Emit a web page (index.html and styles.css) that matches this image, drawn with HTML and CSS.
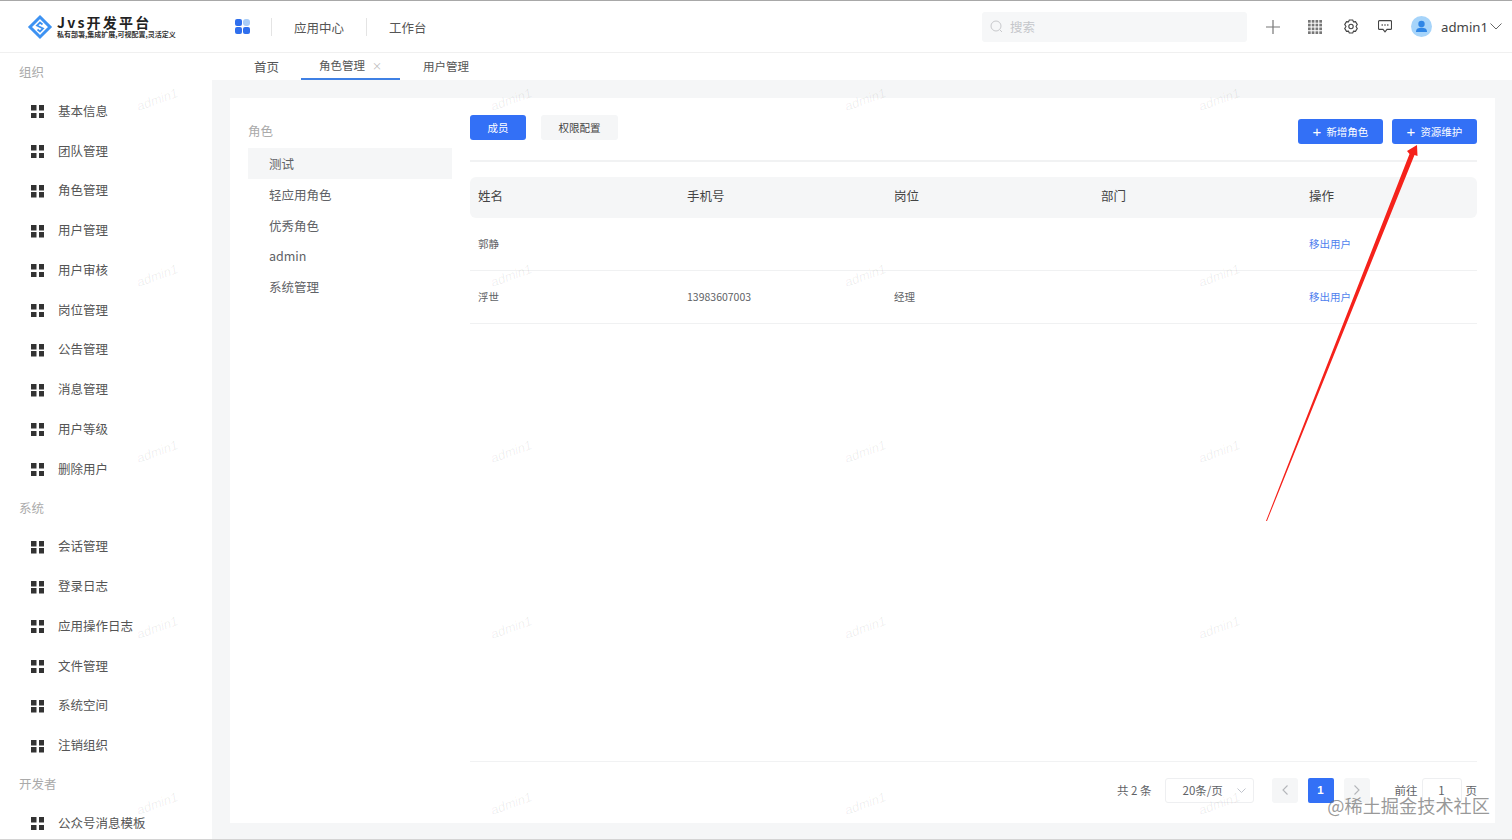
FILE: index.html
```html
<!DOCTYPE html>
<html lang="zh-CN">
<head>
    <meta charset="UTF-8">
    <title>Jvs开发平台</title>
    <link rel="stylesheet" href="styles.css">
</head>
<body>

    <!-- Top bar -->
    <div class="topbar">
        <div class="logo">
            <svg class="logo-icon" width="26" height="26" viewBox="0 0 26 26" fill="none" stroke="#3d92f2">
                <path d="M13 3 L23 13 L13 23 L3 13 Z" stroke-width="3"/>
                <path d="M15.500 10.500 L13 8.500 L10 11.500 L16 14.500 L13 17.500 L10.500 15.500" stroke-width="1.800"/>
            </svg>
            <div class="logo-text">
                <div class="logo-title">Jvs开发平台</div>
                <div class="logo-sub">私有部署,集成扩展,可视配置,灵活定义</div>
            </div>
        </div>
        <svg class="app-icon" width="15" height="15" viewBox="0 0 15 15">
            <rect x="0" y="0" width="7" height="7" rx="2" fill="#2f6fed"/>
            <rect x="8" y="0" width="7" height="7" rx="3" fill="#a9cdf7"/>
            <rect x="0" y="8" width="7" height="7" rx="2" fill="#2f6fed"/>
            <rect x="8" y="8" width="7" height="7" rx="2" fill="#2f6fed"/>
        </svg>
        <div class="nav">
            <div class="nav-item">应用中心</div>
            <div class="nav-item">工作台</div>
        </div>
        <div class="search">
            <svg width="13" height="13" viewBox="0 0 13 13" fill="none" stroke="#c8c9cc" stroke-width="1">
                <circle cx="6" cy="6" r="5"/>
                <path d="M10 10 L12 12"/>
            </svg>
            <span>搜索</span>
        </div>
        <div class="tools">
            <svg class="tool-plus" width="14" height="14" viewBox="0 0 14 14" stroke="#777" stroke-width="1.200">
                <path d="M7 0 V14 M0 7 H14"/>
            </svg>
            <svg class="tool-grid" width="14" height="14" viewBox="0 0 14 14" fill="#777">
                <rect x="0" y="0" width="2.700" height="2.700"/><rect x="3.700" y="0" width="2.700" height="2.700"/><rect x="7.500" y="0" width="2.700" height="2.700"/><rect x="11.300" y="0" width="2.700" height="2.700"/>
                <rect x="0" y="3.700" width="2.700" height="2.700"/><rect x="3.700" y="3.700" width="2.700" height="2.700"/><rect x="7.500" y="3.700" width="2.700" height="2.700"/><rect x="11.300" y="3.700" width="2.700" height="2.700"/>
                <rect x="0" y="7.500" width="2.700" height="2.700"/><rect x="3.700" y="7.500" width="2.700" height="2.700"/><rect x="7.500" y="7.500" width="2.700" height="2.700"/><rect x="11.300" y="7.500" width="2.700" height="2.700"/>
                <rect x="0" y="11.300" width="2.700" height="2.700"/><rect x="3.700" y="11.300" width="2.700" height="2.700"/><rect x="7.500" y="11.300" width="2.700" height="2.700"/><rect x="11.300" y="11.300" width="2.700" height="2.700"/>
            </svg>
            <svg class="tool-gear" width="14" height="15" viewBox="0 0 14 15" fill="none" stroke="#444" stroke-width="1.100">
                <path d="M5.300 1 H8.700 L9.500 2.800 L11.500 2.600 L13.300 5.600 L12 7.500 L13.300 9.400 L11.500 12.400 L9.500 12.200 L8.700 14 H5.300 L4.500 12.200 L2.500 12.400 L0.700 9.400 L2 7.500 L0.700 5.600 L2.500 2.600 L4.500 2.800 Z"/>
                <circle cx="7" cy="7.500" r="2.200"/>
            </svg>
            <svg class="tool-chat" width="14" height="13" viewBox="0 0 14 13" fill="none" stroke="#444" stroke-width="1.100">
                <path d="M1.500 0.600 H12.500 A1 1 0 0 1 13.500 1.600 V8.400 A1 1 0 0 1 12.500 9.400 H9 L7 11.800 L5 9.400 H1.500 A1 1 0 0 1 0.500 8.400 V1.600 A1 1 0 0 1 1.500 0.600 Z"/>
                <path d="M3.600 5 H4.800 M6.400 5 H7.600 M9.200 5 H10.400" stroke-width="1.300"/>
            </svg>
            <svg class="avatar" width="21" height="21" viewBox="0 0 21 21">
                <circle cx="10.500" cy="10.500" r="10.500" fill="#a6d4fa"/>
                <circle cx="10.500" cy="8" r="3.200" fill="#2f86e6"/>
                <path d="M5 16 C5 12.500 7.500 11.800 10.500 11.800 C13.500 11.800 16 12.500 16 16 Z" fill="#2f86e6"/>
            </svg>
            <span class="user-name">admin1</span>
            <svg width="12" height="7" viewBox="0 0 12 7" fill="none" stroke="#666" stroke-width="1">
                <path d="M0.500 0.500 L6 6 L11.500 0.500"/>
            </svg>
        </div>
    </div>

    <div class="layout">
        <!-- Left menu -->
        <div class="sidebar">
            <div class="group-title">组织</div>
            <div class="menu-item"><i class="grid-icon"></i>基本信息</div>
            <div class="menu-item"><i class="grid-icon"></i>团队管理</div>
            <div class="menu-item"><i class="grid-icon"></i>角色管理</div>
            <div class="menu-item"><i class="grid-icon"></i>用户管理</div>
            <div class="menu-item"><i class="grid-icon"></i>用户审核</div>
            <div class="menu-item"><i class="grid-icon"></i>岗位管理</div>
            <div class="menu-item"><i class="grid-icon"></i>公告管理</div>
            <div class="menu-item"><i class="grid-icon"></i>消息管理</div>
            <div class="menu-item"><i class="grid-icon"></i>用户等级</div>
            <div class="menu-item"><i class="grid-icon"></i>删除用户</div>
            <div class="group-title">系统</div>
            <div class="menu-item"><i class="grid-icon"></i>会话管理</div>
            <div class="menu-item"><i class="grid-icon"></i>登录日志</div>
            <div class="menu-item"><i class="grid-icon"></i>应用操作日志</div>
            <div class="menu-item"><i class="grid-icon"></i>文件管理</div>
            <div class="menu-item"><i class="grid-icon"></i>系统空间</div>
            <div class="menu-item"><i class="grid-icon"></i>注销组织</div>
            <div class="group-title">开发者</div>
            <div class="menu-item"><i class="grid-icon"></i>公众号消息模板</div>
        </div>

        <div class="content">
            <!-- Tabs -->
            <div class="tabs">
                <div class="tab">首页</div>
                <div class="tab tab-active">角色管理<span class="tab-close">×</span></div>
                <div class="tab tab-small">用户管理</div>
            </div>

            <div class="main">
                <div class="card">
                    <!-- Role list -->
                    <div class="roles">
                        <div class="roles-title">角色</div>
                        <div class="role role-active">测试</div>
                        <div class="role">轻应用角色</div>
                        <div class="role">优秀角色</div>
                        <div class="role">admin</div>
                        <div class="role">系统管理</div>
                    </div>

                    <div class="panel">
                        <div class="toolbar">
                            <div class="btn btn-primary btn-member">成员</div>
                            <div class="btn btn-plain">权限配置</div>
                            <div class="toolbar-right">
                                <div class="btn btn-primary btn-add"><span class="plus">+</span>新增角色</div>
                                <div class="btn btn-primary btn-add"><span class="plus">+</span>资源维护</div>
                            </div>
                        </div>

                        <!-- Members table -->
                        <div class="row row-head">
                            <div>姓名</div>
                            <div>手机号</div>
                            <div>岗位</div>
                            <div>部门</div>
                            <div>操作</div>
                        </div>
                        <div class="row">
                            <div>郭静</div>
                            <div></div>
                            <div></div>
                            <div></div>
                            <div class="link">移出用户</div>
                        </div>
                        <div class="row">
                            <div>浮世</div>
                            <div>13983607003</div>
                            <div>经理</div>
                            <div></div>
                            <div class="link">移出用户</div>
                        </div>

                        <!-- Pagination -->
                        <div class="pager">
                            <span class="pager-total">共 2 条</span>
                            <div class="pager-size">
                                <span>20条/页</span>
                                <svg width="9" height="5" viewBox="0 0 9 5" fill="none" stroke="#c0c4cc" stroke-width="1">
                                    <path d="M0.500 0.500 L4.500 4.500 L8.500 0.500"/>
                                </svg>
                            </div>
                            <div class="pager-btn">
                                <svg width="6" height="10" viewBox="0 0 6 10" fill="none" stroke="#b4b6ba" stroke-width="1.100"><path d="M5.500 0.500 L1 5 L5.500 9.500"/></svg>
                            </div>
                            <div class="pager-num">1</div>
                            <div class="pager-btn">
                                <svg width="6" height="10" viewBox="0 0 6 10" fill="none" stroke="#b4b6ba" stroke-width="1.100"><path d="M0.500 0.500 L5 5 L0.500 9.500"/></svg>
                            </div>
                            <span class="pager-goto">前往</span>
                            <div class="pager-input">1</div>
                            <span>页</span>
                        </div>
                    </div>
                </div>
            </div>
        </div>
    </div>

    <!-- Watermarks lie over the whole page -->
    <div class="watermarks">
        <div class="watermark-grid">
            <span>admin1</span><span>admin1</span><span>admin1</span><span>admin1</span>
            <span>admin1</span><span>admin1</span><span>admin1</span><span>admin1</span>
            <span>admin1</span><span>admin1</span><span>admin1</span><span>admin1</span>
            <span>admin1</span><span>admin1</span><span>admin1</span><span>admin1</span>
            <span>admin1</span><span>admin1</span><span>admin1</span><span>admin1</span>
        </div>
    </div>

    <!-- Red annotation arrow -->
    <svg class="arrow" width="1512" height="840" viewBox="0 0 1512 840">
        <path d="M1266 521 L1409.500 154 L1407 151 L1417 145 L1417.500 156 L1414.500 155 L1267 521 Z" fill="#f5221b"/>
    </svg>

    <div class="site-mark">@稀土掘金技术社区</div>

</body>
</html>
```

FILE: styles.css
```css
html {
    overflow: hidden;
}

body {
    margin: 0;
    height: 840px;
    overflow: hidden;
    position: relative;
    box-sizing: border-box;
    border-top: 1px solid #a8a8a8;
    border-bottom: 1px solid #d4d4d4;
    background-color: #fff;
    color: #606266;
    font-family: "Noto Sans CJK SC", "Liberation Sans", sans-serif;
    font-size: 12.5px;
}

/* Top bar */
.topbar {
    display: flex;
    align-items: center;
    height: 52px;
    padding-left: 27px;
    box-sizing: border-box;
    background-color: #fff;
    border-bottom: 1px solid #f0f0f0;
}

.logo {
    display: flex;
    align-items: center;
    gap: 4px;
    width: 208px;
}

.logo-title {
    font-size: 14px;
    line-height: 16px;
    font-weight: bold;
    letter-spacing: 2.2px;
    color: #222;
}

.logo-sub {
    font-size: 7px;
    line-height: 9px;
    font-weight: bold;
    color: #333;
    white-space: nowrap;
}

.nav {
    display: flex;
    margin-left: 21px;
}

.nav-item {
    padding: 1px 22px 0;
    line-height: 17px;
    border-left: 1px solid #e4e4e4;
    font-size: 12.5px;
    color: #555;
}

.search {
    display: flex;
    align-items: center;
    gap: 7px;
    width: 265px;
    height: 30px;
    box-sizing: border-box;
    padding-left: 8px;
    margin-left: auto;
    border-radius: 3px;
    background-color: #f6f7f8;
    color: #c4c6ca;
}

.tools {
    display: flex;
    align-items: center;
    margin-left: 19px;
    padding-right: 10px;
}

.tool-grid {
    margin-left: 28px;
}

.tool-gear {
    margin-left: 22px;
}

.tool-chat {
    margin-left: 20px;
}

.avatar {
    margin-left: 19px;
}

.user-name {
    margin: 0 2px 0 9px;
    font-size: 13.2px;
    font-family: "Noto Sans", "Liberation Sans", sans-serif;
    color: #444;
}

/* Layout */
.layout {
    display: flex;
    height: 786px;
}

.sidebar {
    flex: none;
    width: 212px;
    overflow: hidden;
    background-color: #fff;
}

.group-title {
    height: 38px;
    padding: 0 0 0 19px;
    line-height: 38px;
    color: #aaa;
}

.menu-item {
    display: flex;
    align-items: center;
    height: 39.75px;
    box-sizing: border-box;
    padding: 0 0 1px 31px;
    color: #555;
}

.grid-icon {
    flex: none;
    width: 13px;
    height: 13px;
    margin: 3px 14px 0 0;
    background:
        linear-gradient(#333, #333) 0 0 / 5.5px 5.5px no-repeat,
        linear-gradient(#333, #333) 100% 0 / 5.5px 5.5px no-repeat,
        linear-gradient(#333, #333) 0 100% / 5.5px 5.5px no-repeat,
        linear-gradient(#333, #333) 100% 100% / 5.5px 5.5px no-repeat;
}

.content {
    flex: 1;
    display: flex;
    flex-direction: column;
    min-width: 0;
}

/* Tabs */
.tabs {
    display: flex;
    height: 27px;
    flex: none;
    padding-left: 20px;
}

.tab {
    padding: 0 22px;
    line-height: 27px;
    color: #555;
}

.tab-small {
    padding: 0 23px;
    font-size: 11.5px;
}

.tab-active {
    padding: 0 18px;
    height: 27px;
    box-sizing: border-box;
    line-height: 25px;
    font-size: 11.5px;
    border-bottom: 2px solid #3f80e4;
}

.tab-close {
    margin-left: 7px;
    font-size: 10px;
    color: #bbb;
}

.main {
    flex: 1;
    padding: 18px 17px 16px 18px;
    background-color: #f5f6f7;
    min-height: 0;
}

.card {
    display: flex;
    height: 100%;
    box-sizing: border-box;
    padding: 0 18px 0 18px;
    background-color: #fff;
}

/* Role list */
.roles {
    flex: none;
    width: 204px;
    margin-right: 18px;
    padding-top: 23px;
}

.roles-title {
    height: 27px;
    line-height: 20px;
    color: #aaa;
}

.role {
    height: 30.8px;
    padding-left: 21px;
    line-height: 31px;
    color: #606266;
}

.role-active {
    background-color: #f5f6f7;
}

/* Right panel */
.panel {
    flex: 1;
    display: flex;
    flex-direction: column;
    min-width: 0;
}

.toolbar {
    display: flex;
    height: 64px;
    flex: none;
    box-sizing: border-box;
    padding-top: 17px;
    gap: 15px;
    margin-bottom: 15px;
    border-bottom: 2px solid #f1f2f3;
}

.toolbar-right {
    display: flex;
    gap: 9px;
    margin: 4px 0 0 auto;
}

.btn {
    display: flex;
    align-items: center;
    justify-content: center;
    height: 25px;
    font-size: 10.5px;
    border-radius: 3px;
}

.btn-primary {
    background-color: #3370f6;
    color: #fff;
}

.btn-plain {
    width: 77px;
    background-color: #f5f6f7;
    color: #444;
}

.btn-member {
    width: 56px;
}

.btn-add {
    width: 85px;
}

.plus {
    margin-right: 5px;
    font-size: 15px;
    line-height: 15px;
    font-family: "Liberation Sans", sans-serif;
}

/* Table */
.row {
    display: grid;
    grid-template-columns: 209px 207px 207px 208px 1fr;
    align-items: center;
    height: 53px;
    flex: none;
    box-sizing: border-box;
    padding: 0 0 1px 8px;
    border-bottom: 1px solid #f0f1f2;
    font-size: 10.5px;
    color: #606266;
}

.row-head {
    height: 41px;
    padding-bottom: 5px;
    border-bottom: none;
    border-radius: 6px;
    background-color: #f5f6f7;
    font-size: 12.5px;
    color: #444;
}

.link {
    color: #4f7fee;
}

/* Pagination */
.pager {
    display: flex;
    align-items: center;
    justify-content: flex-end;
    flex: none;
    height: 62px;
    box-sizing: border-box;
    padding-bottom: 5px;
    margin-top: auto;
    border-top: 1px solid #f1f2f3;
    font-size: 11.5px;
    color: #606266;
}

.pager-size {
    display: flex;
    align-items: center;
    justify-content: space-between;
    width: 89px;
    height: 25px;
    box-sizing: border-box;
    margin: 0 18px 0 13px;
    padding: 0 7px 0 17px;
    border: 1px solid #eeeff1;
    border-radius: 3px;
}

.pager-btn {
    display: flex;
    align-items: center;
    justify-content: center;
    width: 26px;
    height: 25px;
    border-radius: 3px;
    background-color: #f5f6f7;
}

.pager-num {
    width: 26px;
    height: 25px;
    margin: 0 10px;
    border-radius: 2px;
    line-height: 25px;
    text-align: center;
    font-weight: bold;
    font-family: "Liberation Sans", sans-serif;
    background-color: #3370f6;
    color: #fff;
}

.pager-goto {
    margin-left: 25px;
}

.pager-input {
    width: 40px;
    height: 25px;
    box-sizing: border-box;
    margin: 0 4px;
    border: 1px solid #eeeff1;
    border-radius: 3px;
    line-height: 23px;
    text-align: center;
}

/* Overlays */
.watermarks {
    position: absolute;
    left: 0;
    top: 0;
    width: 100%;
    height: 100%;
    overflow: hidden;
    pointer-events: none;
}

.watermark-grid {
    display: grid;
    grid-template-columns: repeat(4, 354px);
    grid-auto-rows: 176px;
    place-items: center;
    margin: 10px 0 0 -20px;
}

.watermark-grid span {
    transform: rotate(-20deg);
    font-size: 13px;
    font-style: italic;
    font-family: "Liberation Sans", sans-serif;
    color: rgba(0, 0, 0, 0.07);
}

.arrow {
    position: absolute;
    left: 0;
    top: -1px;
    pointer-events: none;
}

.site-mark {
    position: absolute;
    right: 22px;
    bottom: 23px;
    font-size: 18.2px;
    line-height: 22px;
    color: rgba(120, 120, 120, 0.75);
}
```
